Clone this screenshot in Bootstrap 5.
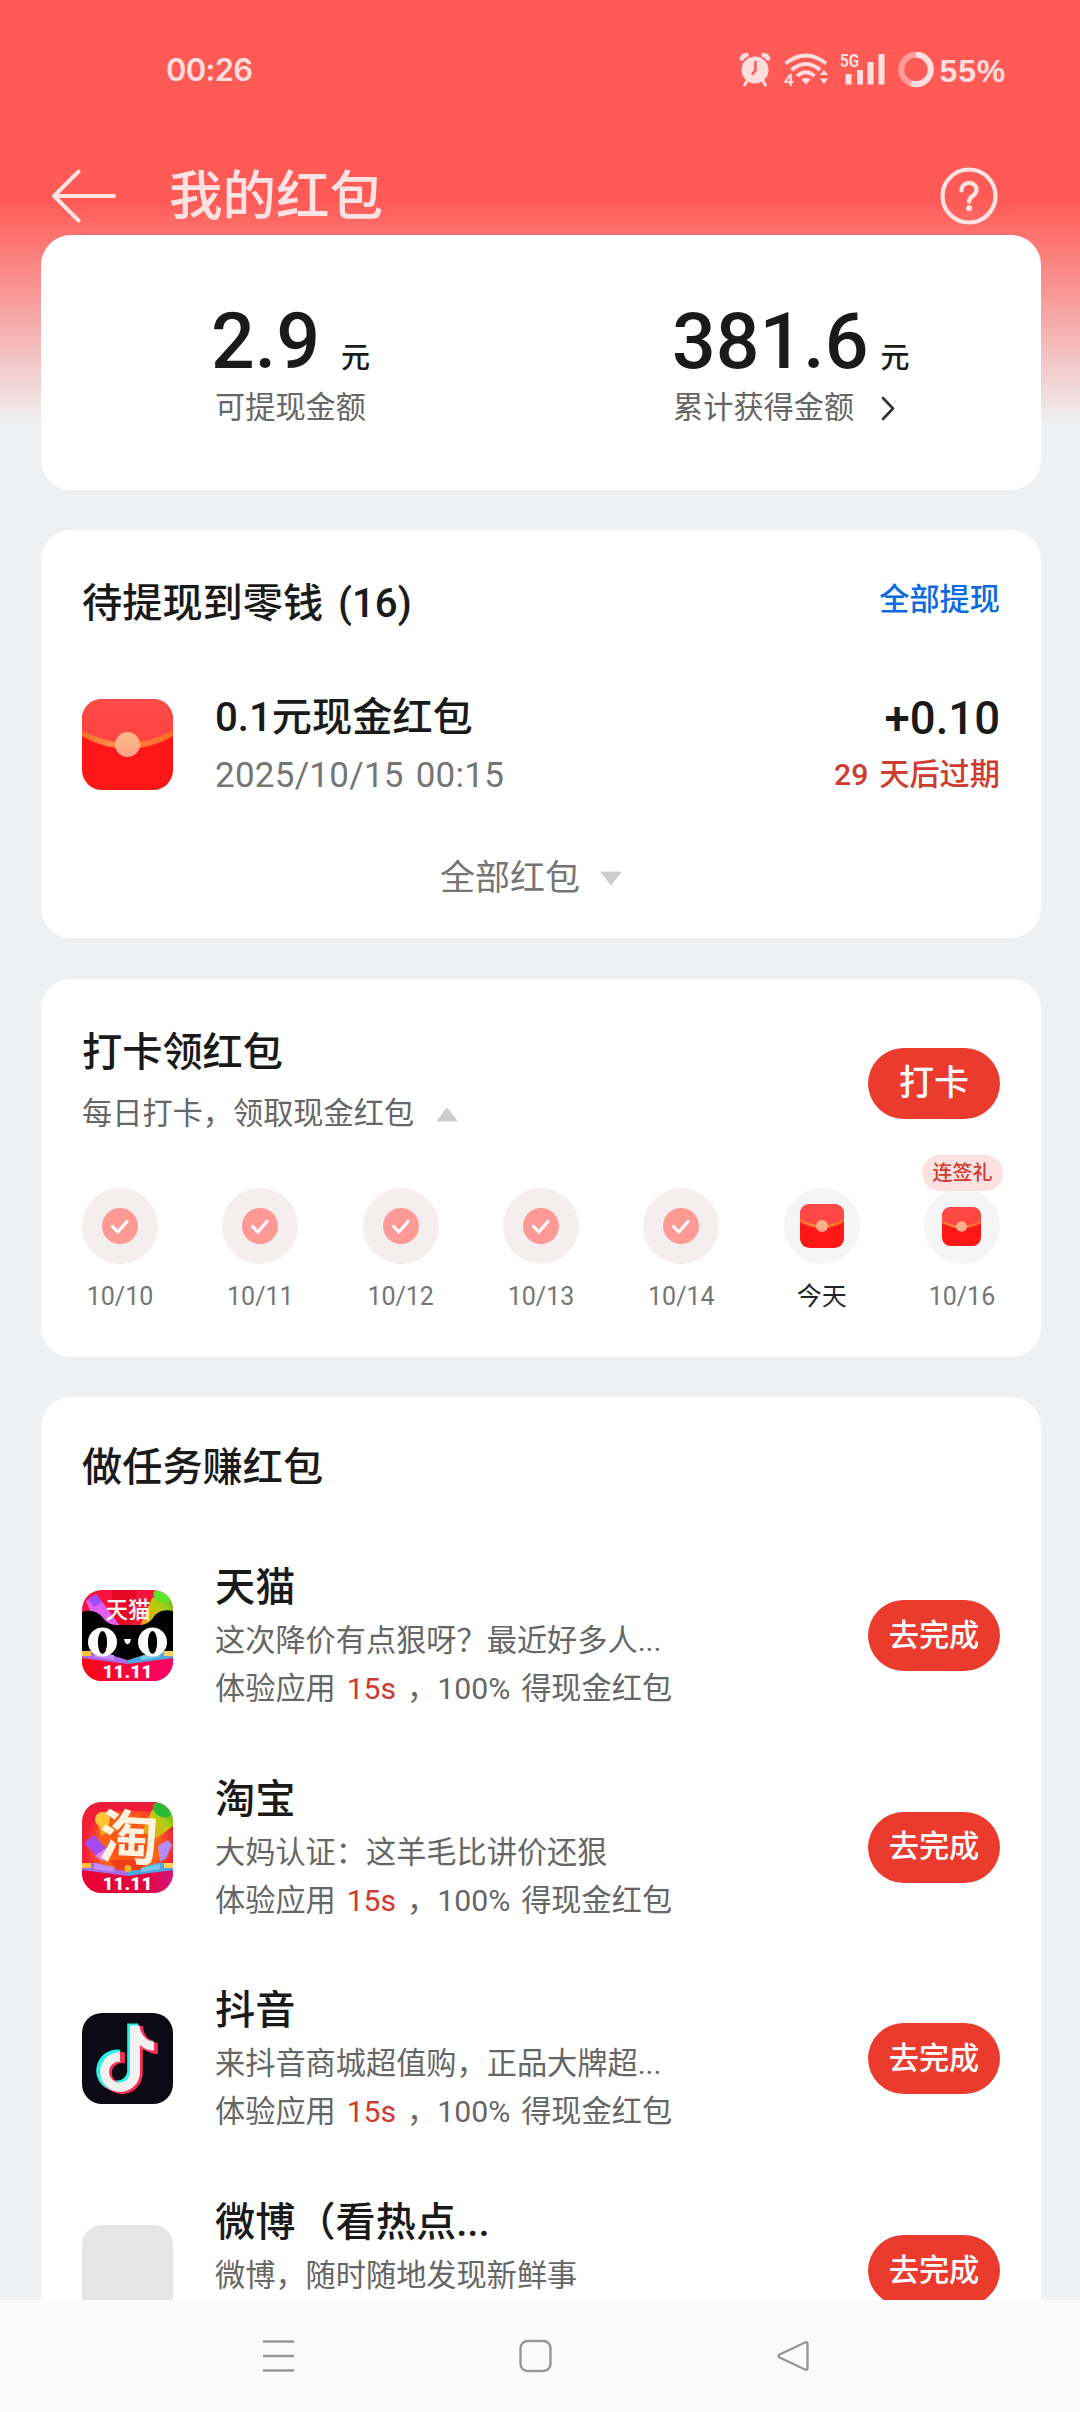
<!DOCTYPE html>
<html lang="zh-CN">
<head>
<meta charset="utf-8">
<meta name="viewport" content="width=device-width, initial-scale=1">
<title>我的红包</title>
<link rel="stylesheet" href="https://cdn.jsdelivr.net/npm/bootstrap@5.3.0/dist/css/bootstrap.min.css">
<style>
body{font-family:Roboto,"Noto Sans CJK SC",sans-serif;background:#eef0f2;color:#1a1a1a;width:1080px;height:2412px;overflow:hidden;margin:0}
svg{display:block;flex:none}
.screen{height:2412px;background:linear-gradient(#ff5a56 0,#ff5a56 200px,#eef0f2 424px)}
.statusbar{height:140px;padding:0 74px 0 166px;color:#ffdedd}
.statusbar .clock{font:600 31px/40px Inter,sans-serif;letter-spacing:-.7px}
.statusbar .level{font:700 32px/40px "Liberation Sans",sans-serif;letter-spacing:.8px;margin:1px 0 0 6px}
.titlebar{height:95px;padding:16px 82px 0 51px;color:#ffe3e2}
.titlebar h1{font-size:53.5px;line-height:80px;font-weight:500;margin:3px 0 0 51px}
.scroller{height:2065px;overflow:hidden;padding:0 39px 0 41px}
.panel{background:#fff;border:0;border-radius:30px;margin-bottom:40px}
.fw-m{font-weight:500}
.t40{font-size:40.2px;line-height:48px;font-weight:500}
.t35{font-size:35px;line-height:40px}
.t30{font-size:30.2px;line-height:40px;word-spacing:3.4px}
.t25{font-size:25px;line-height:32px}
.grey{color:#666}
.grey2{color:#757575}
.warn{color:#cf3a31}
.sum{height:255px;padding-top:66px}
.sum .big{font-size:77px;line-height:82px;font-weight:500}
.sum .yuan{font-size:29px;line-height:40px;font-weight:500}
.wallet{height:408px;padding:50px 41px 0 41px;margin-bottom:41px}
.wallet .link{color:#0b6ae0}
.checkin{height:378px;padding:50px 41px 0 41px}
.pill{background:#eb3b2f;color:#fff;width:132px;height:71px;border-radius:36px;border:0;padding:0;font-weight:500}
.day{width:76px}
.lbl{padding-top:17px}
.dot{width:76px;height:76px;border-radius:50%;background:#f5eeee;display:flex;align-items:center;justify-content:center}
.dot.next{background:#f5f5f5}
.gift{position:absolute;left:-2px;top:-33px;width:81px;height:36px;border-radius:18px;background:#fbe2e1;color:#cf3a31;font-size:20px;line-height:36px;font-weight:500;text-align:center}
.tasks{height:1100px;padding:47px 41px 0 41px;border-radius:30px 30px 0 0}
.task{height:211.7px}
.blank{width:91px;height:91px;border-radius:20px;background:#e6e6e6}
.sysnav{height:112px;background:#fbfbfb;padding:0 271px 0 262px}
</style>
<script src="https://cdn.jsdelivr.net/npm/bootstrap@5.3.0/dist/js/bootstrap.bundle.min.js"></script>
</head>
<body>
<svg width="0" height="0" class="position-absolute" aria-hidden="true">
  <defs>
    <linearGradient id="lid" x1="0" y1="0" x2="0" y2="1"><stop offset="0" stop-color="#ff4b48"/><stop offset="1" stop-color="#ff433f"/></linearGradient>
    <linearGradient id="knob" x1="0" y1="0" x2="0" y2="1"><stop offset="0" stop-color="#ffb985"/><stop offset="1" stop-color="#f7a28a"/></linearGradient>
    <linearGradient id="strap" x1="0" x2="1"><stop offset="0" stop-color="#ff6a2c"/><stop offset=".3" stop-color="#ff8a4a"/><stop offset="1" stop-color="#ff6a2c"/></linearGradient>
    <linearGradient id="pinkred" x1="0" x2="1"><stop offset="0" stop-color="#fb0712"/><stop offset="1" stop-color="#ff0068"/></linearGradient>
    <linearGradient id="sale" x1="0" x2="1"><stop offset="0" stop-color="#e90033"/><stop offset=".7" stop-color="#e5003e"/><stop offset="1" stop-color="#d4197c"/></linearGradient>
    <linearGradient id="lime" x1="1" y1="0" x2="0" y2="1"><stop offset="0" stop-color="#3fc22c"/><stop offset=".45" stop-color="#b4cc10"/><stop offset="1" stop-color="#ff9a16"/></linearGradient>
    <radialGradient id="glow"><stop offset="0" stop-color="#ff4a0c"/><stop offset=".65" stop-color="#ff6a12"/><stop offset="1" stop-color="#f5273a"/></radialGradient>
    <clipPath id="tile"><rect width="91" height="91" rx="20"/></clipPath>
    <symbol id="packet" viewBox="0 0 91 91">
      <g clip-path="url(#tile)">
        <rect width="91" height="91" fill="#ff1718"/>
        <path d="M0 0H91V33Q45.500 61 0 33Z" fill="url(#lid)"/>
        <path d="M0 34Q45.500 60 91 34" fill="none" stroke="url(#strap)" stroke-width="5.500"/>
        <circle cx="45.500" cy="45.500" r="12.500" fill="url(#knob)"/>
      </g>
    </symbol>
    <symbol id="done" viewBox="0 0 36 36">
      <circle cx="18" cy="18" r="18" fill="#ff9996"/>
      <path d="M10.500 18.500L15.800 24L25 13.500" fill="none" stroke="#fff" stroke-width="3.200" stroke-linecap="round" stroke-linejoin="round"/>
    </symbol>
    <path id="note" d="M47 11H58C59 21 65 27 73 28V39C68 39 62 37 58 33V58A21 21 0 1 1 40 37.200V48.500A10 10 0 1 0 47 58Z"/>
    <symbol id="ribbon" viewBox="0 0 91 91">
      <path d="M0 61H16L45.500 70V74L0 68Z" fill="#a86be8"/><path d="M0 61H9V66H0Z" fill="#ffc23c"/><path d="M12 61L32 65V70L12 67Z" fill="#c78cf5"/>
      <path d="M91 61H75L45.500 70V74L91 68Z" fill="#50a6e0"/><path d="M91 61H82V66H91Z" fill="#ffd060"/><path d="M78 62L59 66V70L78 67Z" fill="#77c9e8"/>
    </symbol>
  </defs>
</svg>

<div class="screen d-flex flex-column">
  <header class="statusbar d-flex align-items-center">
    <span class="clock me-auto">00:26</span>
    <svg class="mb-1" width="204" height="44" viewBox="0 0 204 44" fill="#ffdedd" font-family="Roboto,sans-serif">
      <!-- alarm -->
      <g transform="translate(9 6)">
        <circle cx="16" cy="18" r="13.500"/>
        <path d="M8 29L5.500 33M24 29L26.500 33" stroke="#ffdedd" stroke-width="3" stroke-linecap="round"/>
        <path d="M3 6.500Q4 3.500 7.500 3M24.500 3Q28 3.500 29 6.500" fill="none" stroke="#ffdedd" stroke-width="4.500" stroke-linecap="round"/>
        <path d="M16.500 10V18L13.500 22" fill="none" stroke="#ff5a56" stroke-width="2.600" stroke-linecap="round"/>
      </g>
      <!-- wifi -->
      <g fill="none" stroke="#ffdedd" stroke-width="3.800">
        <path d="M55.500 17.500Q76 1.500 96 17.500"/><path d="M61.500 24Q76 12 90 24"/><path d="M67 30Q76 22.500 84.500 30"/>
      </g>
      <path d="M71.500 33.500Q76 30 80.500 33.500L76 38.500Z M90 29L94 24L98 29Z M90 32.500L94 38L98 32.500Z"/>
      <text x="54" y="39.500" font-size="17" font-weight="700">4</text>
      <!-- cellular -->
      <g transform="translate(110 20.500) scale(.85 1)"><text font-size="18" font-weight="700">5G</text></g>
      <rect x="115.500" y="28" width="6" height="10.500"/><rect x="127" y="24" width="6" height="14.500"/><rect x="137.500" y="16" width="6" height="22.500"/><rect x="148.500" y="8" width="6" height="30.500"/>
      <!-- battery ring -->
      <circle cx="186" cy="23.500" r="14.700" fill="none" stroke="#ff9b98" stroke-width="6"/>
      <path d="M186 8.800A14.700 14.700 0 1 1 181.300 37.400" fill="none" stroke="#ffdedd" stroke-width="6"/>
    </svg>
    <span class="level">55%</span>
  </header>

  <div class="titlebar d-flex align-items-center">
    <svg width="67" height="56" viewBox="0 0 67 56" fill="none" stroke="#ffe3e2" stroke-width="4" stroke-linecap="round" stroke-linejoin="round"><path d="M63 28H3M27.500 3.500L3 28L27.500 52.500"/></svg>
    <h1>我的红包</h1>
    <svg class="ms-auto" width="58" height="58" viewBox="0 0 58 58" fill="none" stroke="#ffe3e2" stroke-width="4.200"><circle cx="29" cy="29" r="26.500"/><path d="M21.500 23.500C21.500 13.500 36.500 13.500 36.500 23C36.500 29 29 28.500 29 35" stroke-linecap="round"/><circle cx="29" cy="41.300" r="3" fill="#ffe3e2" stroke="none"/></svg>
  </div>

  <main class="scroller">
    <section class="card panel sum">
      <div class="row g-0">
        <div class="col-6" style="padding-left:170px">
          <div class="d-flex align-items-baseline"><span class="big">2.9</span><span class="yuan" style="margin-left:21px">元</span></div>
          <div class="t30 grey" style="padding:5px 0 0 4px">可提现金额</div>
        </div>
        <div class="col-6" style="padding-left:131px">
          <div class="d-flex align-items-baseline"><span class="big">381.6</span><span class="yuan" style="margin-left:12px">元</span></div>
          <div class="t30 grey d-flex align-items-center" style="padding:5px 0 0 1px">累计获得金额
            <svg class="ms-4" width="20" height="26" viewBox="0 0 20 26" fill="none" stroke="#333" stroke-width="2.600" stroke-linecap="round" stroke-linejoin="round"><path d="M5 3L15 13.500L5 24"/></svg>
          </div>
        </div>
      </div>
    </section>

    <section class="card panel wallet">
      <div class="d-flex justify-content-between align-items-start">
        <div class="t40" style="word-spacing:5px">待提现到零钱 (16)</div>
        <div class="t30 fw-m link">全部提现</div>
      </div>
      <div class="d-flex align-items-start" style="margin-top:66px">
        <svg width="91" height="91" style="margin-top:5px"><use href="#packet"/></svg>
        <div style="margin-left:42px">
          <div class="t40">0.1元现金红包</div>
          <div class="t35 grey2" style="margin-top:14px;letter-spacing:.25px;word-spacing:3px">2025/10/15 00:15</div>
        </div>
        <div class="ms-auto text-end">
          <div class="fw-m" style="font-size:45.5px;line-height:50px">+0.10</div>
          <div class="t30 fw-m warn" style="margin-top:11px">29 天后过期</div>
        </div>
      </div>
      <div class="d-flex align-items-center t35 grey2" style="margin:63px 0 0 358px">全部红包
        <svg width="22" height="15" viewBox="0 0 22 15" style="margin:0 0 2px 20px"><path d="M1 1H21L11 14Z" fill="#ccc" stroke="#ccc" stroke-linejoin="round"/></svg>
      </div>
    </section>

    <section class="card panel checkin">
      <div class="d-flex justify-content-between align-items-start">
        <div>
          <div class="t40">打卡领红包</div>
          <div class="t30 grey d-flex align-items-center" style="margin-top:17px">每日打卡，领取现金红包
            <svg width="22" height="15" viewBox="0 0 22 15" style="margin:1px 0 0 22px"><path d="M1 14H21L11 1Z" fill="#ccc" stroke="#ccc" stroke-linejoin="round"/></svg>
          </div>
        </div>
        <button class="btn pill t35" style="margin-top:19px">打卡</button>
      </div>
      <div class="d-flex justify-content-between text-center t25 grey2" style="margin-top:54px">
        <div class="day"><div class="dot"><svg width="36" height="36"><use href="#done"/></svg></div><div class="lbl">10/10</div></div>
        <div class="day"><div class="dot"><svg width="36" height="36"><use href="#done"/></svg></div><div class="lbl">10/11</div></div>
        <div class="day"><div class="dot"><svg width="36" height="36"><use href="#done"/></svg></div><div class="lbl">10/12</div></div>
        <div class="day"><div class="dot"><svg width="36" height="36"><use href="#done"/></svg></div><div class="lbl">10/13</div></div>
        <div class="day"><div class="dot"><svg width="36" height="36"><use href="#done"/></svg></div><div class="lbl">10/14</div></div>
        <div class="day"><div class="dot next"><svg width="44" height="44"><use href="#packet"/></svg></div><div class="lbl text-dark">今天</div></div>
        <div class="day position-relative"><div class="dot next"><svg width="39" height="39"><use href="#packet"/></svg></div><div class="lbl">10/16</div><span class="gift">连签礼</span></div>
      </div>
    </section>

    <section class="card panel tasks">
      <div class="t40" style="margin-bottom:72px">做任务赚红包</div>

      <div class="task d-flex align-items-start">
        <svg width="91" height="91" viewBox="0 0 91 91" style="margin-top:26px">
          <g clip-path="url(#tile)">
            <rect width="91" height="91" fill="#f6143c"/>
            <path d="M30 0H55L50 36H30Z" fill="#e50b28"/>
            <path d="M4 11L14 4L30 25L38 36H14Z" fill="#e25ef0"/><path d="M6 9L14 4L20 12L12 17Z" fill="#a04cf8"/>
            <path d="M70 8L91 0V24L68 36H58Z" fill="url(#lime)"/><ellipse cx="80" cy="6" rx="9" ry="6" fill="#5ee32e" transform="rotate(25 80 6)"/>
            <path d="M0 22Q13 18 21 28Q26 35 34 35H58Q66 35 71 28Q77 18 91 21V62L46 71L0 62Z"/>
            <path d="M0 66L46 73L91 66V91H0Z" fill="url(#pinkred)"/>
            <use href="#ribbon" width="91" height="91"/>
            <path d="M16 59L46 70L75 59Z"/>
            <circle cx="20.500" cy="52" r="14.500" fill="#fff"/><circle cx="70.500" cy="52" r="14.500" fill="#fff"/>
            <ellipse cx="20.500" cy="52.500" rx="4.600" ry="11.500"/><ellipse cx="70.500" cy="52.500" rx="4.600" ry="11.500"/>
            <path d="M42 49H49L48 52.500L45.500 54.500L43 52.500Z" fill="#fff"/>
            <text x="46" y="28" text-anchor="middle" font-size="22.500" font-weight="500" fill="#fff" font-family="Noto Sans CJK SC,sans-serif">天猫</text>
            <text x="45.500" y="88" text-anchor="middle" font-size="19" font-weight="900" fill="#fff" font-family="Roboto,sans-serif">11.11</text>
          </g>
        </svg>
        <div style="margin-left:42px">
          <div class="t40">天猫</div>
          <div class="t30 grey" style="margin-top:9px">这次降价有点狠呀？最近好多人...</div>
          <div class="t30 grey" style="margin-top:8px">体验应用 <span class="warn">15s</span> ，100% 得现金红包</div>
        </div>
        <button class="btn pill t30 ms-auto" style="margin-top:36px">去完成</button>
      </div>

      <div class="task d-flex align-items-start">
        <svg width="91" height="91" viewBox="0 0 91 91" style="margin-top:26px">
          <g clip-path="url(#tile)">
            <rect width="91" height="91" fill="#f22035"/>
            <path d="M17 0H40L46 20H30Z" fill="#ff3548"/><circle cx="48" cy="44" r="44" fill="url(#glow)" opacity=".9"/><path d="M0 0H91V9H0Z" fill="#ed1c38"/>
            <path d="M70 8L91 0V24L75 36L60 30Z" fill="url(#lime)"/><ellipse cx="80" cy="8" rx="10" ry="6.500" fill="#28ba35" transform="rotate(28 80 8)"/>
            <path d="M2 41L12 33L24 46L14 54Z" fill="#a64af0"/><path d="M13 54L24 46L29 54L20 59Z" fill="#e083f2"/>
            <path d="M76 44L86 38L90 43L84 56L78 60Z" fill="#b58cf5"/>
            <path d="M15 18L27 14V29L19 34Z" fill="#ffa31a"/><circle cx="20.500" cy="17.500" r="7.500" fill="#ffc531"/>
            <path d="M0 65L46 72L91 65V91H0Z" fill="url(#sale)"/>
            <use href="#ribbon" width="91" height="91"/>
            <path d="M28 58H65L58 68H35Z" fill="#ee3d17"/><circle cx="46" cy="66.500" r="3.500" fill="#ffb52b"/>
            <text x="47" y="57" text-anchor="middle" font-size="59" font-weight="700" fill="#fff3df" font-family="Noto Sans CJK SC,sans-serif" transform="rotate(3 47 35)">淘</text>
            <text x="45.500" y="88" text-anchor="middle" font-size="19" font-weight="900" fill="#fff" font-family="Roboto,sans-serif">11.11</text>
          </g>
        </svg>
        <div style="margin-left:42px">
          <div class="t40">淘宝</div>
          <div class="t30 grey" style="margin-top:9px">大妈认证：这羊毛比讲价还狠</div>
          <div class="t30 grey" style="margin-top:8px">体验应用 <span class="warn">15s</span> ，100% 得现金红包</div>
        </div>
        <button class="btn pill t30 ms-auto" style="margin-top:36px">去完成</button>
      </div>

      <div class="task d-flex align-items-start">
        <svg width="91" height="91" viewBox="0 0 91 91" style="margin-top:26px">
          <rect width="91" height="91" rx="20" fill="#0b0a15"/>
          <use href="#note" transform="translate(-1.800 -.5)" fill="#25f4e6"/><use href="#note" transform="translate(2.800 2)" fill="#fe2f56"/><path d="M48 12.500H57.500C58.500 22.500 65 28 72 29V37.500C67 37.500 62 36 58 32V58.500A20 20 0 1 1 38 39V48.500A10.500 10.500 0 1 0 48 58.500Z" fill="#f3f0f2"/>
        </svg>
        <div style="margin-left:42px">
          <div class="t40">抖音</div>
          <div class="t30 grey" style="margin-top:9px">来抖音商城超值购，正品大牌超...</div>
          <div class="t30 grey" style="margin-top:8px">体验应用 <span class="warn">15s</span> ，100% 得现金红包</div>
        </div>
        <button class="btn pill t30 ms-auto" style="margin-top:36px">去完成</button>
      </div>

      <div class="task d-flex align-items-start">
        <div class="blank" style="margin-top:26px"></div>
        <div style="margin-left:42px">
          <div class="t40">微博（看热点...</div>
          <div class="t30 grey" style="margin-top:9px">微博，随时随地发现新鲜事</div>
        </div>
        <button class="btn pill t30 ms-auto" style="margin-top:36px">去完成</button>
      </div>
    </section>
  </main>

  <nav class="sysnav d-flex align-items-center justify-content-between">
    <svg width="33" height="34" viewBox="0 0 33 34" stroke="#979797" stroke-width="2.600"><path d="M1 2.500H32M1 17H32M1 31.500H32"/></svg>
    <svg width="33" height="34" viewBox="0 0 33 34" fill="none" stroke="#979797" stroke-width="2.400"><rect x="1.500" y="2" width="30" height="30" rx="7"/></svg>
    <svg width="33" height="34" viewBox="0 0 33 34" fill="none" stroke="#979797" stroke-width="2.400" stroke-linejoin="round"><path d="M29 3.500Q31.500 2.500 31.500 5V29Q31.500 31.500 29 30.500L3.500 18.500Q1.500 17 3.500 15.500Z"/></svg>
  </nav>
</div>
</body>
</html>
